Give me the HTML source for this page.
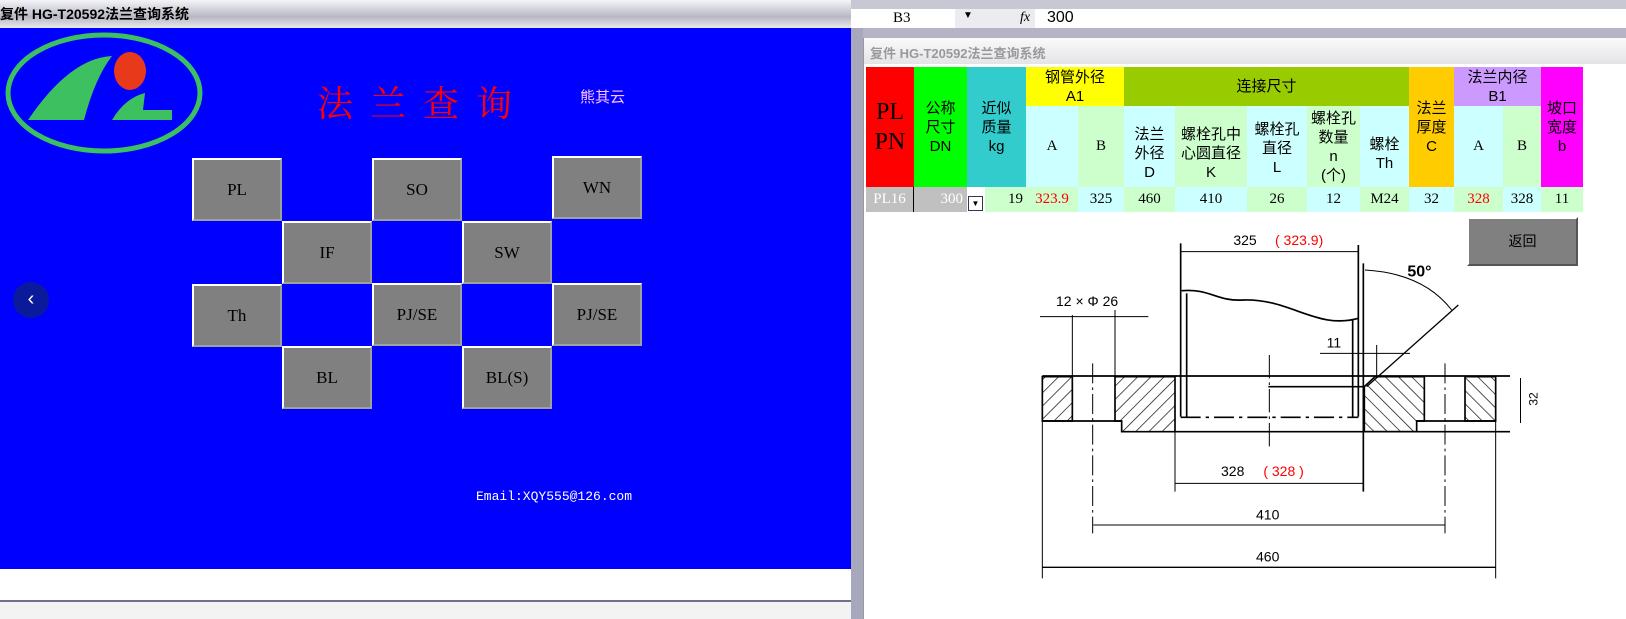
<!DOCTYPE html>
<html><head><meta charset="utf-8"><style>
*{margin:0;padding:0;box-sizing:border-box}
body{width:1626px;height:619px;overflow:hidden;background:#fff;position:relative;font-family:"Liberation Serif","Noto Serif CJK SC",serif}
.a{position:absolute}
.btn{position:absolute;width:90px;height:63px;background:#808080;border-top:2px solid #fff;border-left:2px solid #fff;border-right:2px solid #a0a0a0;border-bottom:2px solid #a0a0a0;color:#000;font-size:17px;display:flex;align-items:center;justify-content:center}
.c{position:absolute;display:flex;align-items:center;justify-content:center;text-align:center;font-size:15px;line-height:19px;color:#000}
.cn{font-family:"Liberation Sans","Noto Sans CJK SC",sans-serif}
</style></head><body>
<!-- left title bar -->
<div class="a" style="left:0;top:0;width:851px;height:28px;background:linear-gradient(#f4f4f8,#b8b8c4 60%,#e8e8ee);"></div>
<div class="a cn" style="left:0;top:4px;font-size:14px;font-weight:bold;color:#000">复件 HG-T20592法兰查询系统</div>
<div class="a" style="left:0;top:28px;width:851px;height:541px;background:#0000ff"></div>
<svg class="a" style="left:0;top:28px" width="220" height="130">
<ellipse cx="104" cy="65" rx="96" ry="58" fill="none" stroke="#3cc060" stroke-width="5"/>
<path d="M28 92 Q70 30 112 28 Q95 50 84 92 Z" fill="#3cc060"/>
<path d="M112 92 Q125 70 145 65 L143 82 L172 82 L172 92 Z" fill="#3cc060"/>
<ellipse cx="130" cy="43" rx="16" ry="19" fill="#e83a1a"/>
</svg>
<div class="a" style="left:317px;top:76px;font-size:36px;color:#ff0000;letter-spacing:17px;font-family:'Noto Serif CJK SC',serif">法兰查询</div>
<div class="a cn" style="left:580px;top:86px;font-size:15px;color:#ffc0ff">熊其云</div>
<div class="btn" style="left:192px;top:158px">PL</div>
<div class="btn" style="left:372px;top:158px">SO</div>
<div class="btn" style="left:552px;top:156px">WN</div>
<div class="btn" style="left:282px;top:221px">IF</div>
<div class="btn" style="left:462px;top:221px">SW</div>
<div class="btn" style="left:192px;top:284px">Th</div>
<div class="btn" style="left:372px;top:283px">PJ/SE</div>
<div class="btn" style="left:552px;top:283px">PJ/SE</div>
<div class="btn" style="left:282px;top:346px">BL</div>
<div class="btn" style="left:462px;top:346px">BL(S)</div>
<div class="a" style="left:13px;top:282px;width:36px;height:36px;border-radius:50%;background:#0a1a9a;color:#fff;font-size:20px;text-align:center;line-height:34px;font-family:'Liberation Sans',sans-serif">‹</div>
<div class="a" style="left:476px;top:489px;color:#fff;font-size:13px;font-family:'Liberation Mono',monospace">Email:XQY555@126.com</div>
<div class="a" style="left:0;top:600px;width:851px;height:2px;background:#707090"></div>
<div class="a" style="left:0;top:602px;width:851px;height:17px;background:#f3f3f3"></div>
<!-- separator -->
<div class="a" style="left:851px;top:28px;width:12px;height:591px;background:#a8a8bc"></div>
<!-- toolbar & formula -->
<div class="a" style="left:851px;top:0;width:775px;height:9px;background:#c8c8d4"></div>
<div class="a" style="left:851px;top:9px;width:775px;height:19px;background:#fff"></div>
<div class="a" style="left:955px;top:9px;width:80px;height:19px;background:#ececf0"></div>
<div class="a" style="left:893px;top:10px;font-size:15px">B3</div>
<div class="a" style="left:963px;top:10px;font-size:10px">▼</div>
<div class="a" style="left:1020px;top:10px;font-size:14px;font-style:italic">fx</div>
<div class="a" style="left:1047px;top:9px;font-size:16px;font-family:'Liberation Sans',sans-serif">300</div>
<div class="a" style="left:863px;top:28px;width:763px;height:591px;background:#b4b4c6"></div>
<div class="a" style="left:863px;top:38px;width:763px;height:581px;background:#fff;border-left:1px solid #999"></div>
<div class="a" style="left:864px;top:38px;width:762px;height:26px;background:linear-gradient(#fafafa,#e4e4e8)"></div>
<div class="a cn" style="left:870px;top:43px;font-size:13px;font-weight:bold;color:#999">复件 HG-T20592法兰查询系统</div>
<!-- table -->
<div class="c" style="left:866px;top:67px;width:48px;height:120px;background:#ff0000;font-size:24px;line-height:30px">PL<br>PN</div>
<div class="c cn" style="left:914px;top:67px;width:53px;height:120px;background:#00ff00">公称<br>尺寸<br>DN</div>
<div class="c cn" style="left:967px;top:67px;width:59px;height:120px;background:#33cccc">近似<br>质量<br>kg</div>
<div class="c cn" style="left:1026px;top:67px;width:98px;height:39px;background:#ffff00">钢管外径<br>A1</div>
<div class="c cn" style="left:1124px;top:67px;width:285px;height:39px;background:#99cc00">连接尺寸</div>
<div class="c cn" style="left:1409px;top:67px;width:45px;height:120px;background:#ffcc00">法兰<br>厚度<br>C</div>
<div class="c cn" style="left:1454px;top:67px;width:87px;height:39px;background:#cc99ff">法兰内径<br>B1</div>
<div class="c cn" style="left:1541px;top:67px;width:42px;height:120px;background:#ff00ff">坡口<br>宽度<br>b</div>
<div class="c" style="left:1026px;top:106px;width:52px;height:81px;background:#ccffff">A</div>
<div class="c" style="left:1078px;top:106px;width:46px;height:81px;background:#ccffcc">B</div>
<div class="c cn" style="left:1124px;top:106px;width:51px;height:81px;background:#ccffff;padding-top:14px">法兰<br>外径<br>D</div>
<div class="c cn" style="left:1175px;top:106px;width:72px;height:81px;background:#ccffcc;padding-top:14px">螺栓孔中<br>心圆直径<br>K</div>
<div class="c cn" style="left:1247px;top:106px;width:60px;height:81px;background:#ccffff;padding-top:4px">螺栓孔<br>直径<br>L</div>
<div class="c cn" style="left:1307px;top:106px;width:53px;height:81px;background:#ccffcc">螺栓孔<br>数量<br>n<br>(个)</div>
<div class="c cn" style="left:1360px;top:106px;width:49px;height:81px;background:#ccffff;padding-top:14px">螺栓<br>Th</div>
<div class="c" style="left:1454px;top:106px;width:49px;height:81px;background:#ccffff">A</div>
<div class="c" style="left:1503px;top:106px;width:38px;height:81px;background:#ccffcc">B</div>
<!-- data row -->
<div class="c" style="left:866px;top:187px;width:48px;height:25px;background:#c0c0c0;color:#fff;border-right:1px solid #000">PL16</div>
<div class="c" style="left:914px;top:187px;width:53px;height:25px;background:#c0c0c0;color:#fff;justify-content:flex-end;padding-right:4px">300</div>
<div class="a" style="left:968px;top:196px;width:15px;height:15px;border:1px solid #335;background:#fff;font-size:8px;text-align:center;line-height:13px">▼</div>
<div class="c" style="left:985px;top:187px;width:41px;height:25px;background:#ccffcc;justify-content:flex-end;padding-right:3px">19</div>
<div class="c" style="left:1026px;top:187px;width:52px;height:25px;background:#ccffcc;color:#f00">323.9</div>
<div class="c" style="left:1078px;top:187px;width:46px;height:25px;background:#ccffff">325</div>
<div class="c" style="left:1124px;top:187px;width:51px;height:25px;background:#ccffcc">460</div>
<div class="c" style="left:1175px;top:187px;width:72px;height:25px;background:#ccffff">410</div>
<div class="c" style="left:1247px;top:187px;width:60px;height:25px;background:#ccffcc">26</div>
<div class="c" style="left:1307px;top:187px;width:53px;height:25px;background:#ccffff">12</div>
<div class="c" style="left:1360px;top:187px;width:49px;height:25px;background:#ccffcc">M24</div>
<div class="c" style="left:1409px;top:187px;width:45px;height:25px;background:#ccffff">32</div>
<div class="c" style="left:1454px;top:187px;width:49px;height:25px;background:#ccffcc;color:#f00">328</div>
<div class="c" style="left:1503px;top:187px;width:38px;height:25px;background:#ccffff">328</div>
<div class="c" style="left:1541px;top:187px;width:42px;height:25px;background:#ccffcc">11</div>
<!-- return button -->
<div class="c cn" style="left:1467px;top:217px;width:111px;height:49px;background:#808080;border-top:2px solid #fff;border-left:2px solid #fff;border-right:2px solid #555;border-bottom:2px solid #555;font-size:14px">返回</div>
<!-- drawing -->
<svg class="a" style="left:1030px;top:220px" width="480" height="360" viewBox="0 0 1440 1080" font-family="Liberation Sans,sans-serif">
<defs><pattern id="h" width="28" height="28" patternUnits="userSpaceOnUse" patternTransform="rotate(45)"><line x1="0" y1="0" x2="0" y2="28" stroke="#000" stroke-width="4"/></pattern>
<pattern id="h2" width="28" height="28" patternUnits="userSpaceOnUse" patternTransform="rotate(-45)"><line x1="0" y1="0" x2="0" y2="28" stroke="#000" stroke-width="4"/></pattern></defs>
<g stroke="#000" stroke-width="5" fill="none">
<rect x="37" y="470" width="90" height="133" fill="url(#h)"/>
<path d="M255 470 H435 V635 H275 V603 H255 Z" fill="url(#h)"/>
<path d="M1003 500 L1035 470 H1183 V603 H1160 V635 H1003 Z" fill="url(#h2)"/>
<rect x="1305" y="470" width="92" height="133" fill="url(#h2)"/>
<line x1="37" y1="468" x2="1440" y2="468"/>
<line x1="37" y1="603" x2="275" y2="603"/>
<line x1="435" y1="635" x2="1440" y2="635"/>
<line x1="1160" y1="603" x2="1397" y2="603"/>
<line x1="452" y1="70" x2="452" y2="590"/><line x1="470" y1="220" x2="470" y2="590"/>
<line x1="985" y1="75" x2="985" y2="590"/><line x1="968" y1="300" x2="968" y2="590"/>
<line x1="1000" y1="130" x2="1000" y2="815"/>
<line x1="452" y1="592" x2="985" y2="592" stroke-dasharray="60 15 10 15"/>
<path d="M455 212 C540 205 560 245 640 240 C780 235 860 330 985 295"/>
<line x1="715" y1="500" x2="1003" y2="500"/>
<line x1="718" y1="405" x2="718" y2="680" stroke-width="3" stroke-dasharray="70 12 8 12"/>
<line x1="188" y1="430" x2="188" y2="940" stroke-width="3" stroke-dasharray="60 12 8 12"/>
<line x1="1245" y1="430" x2="1245" y2="940" stroke-width="3" stroke-dasharray="60 12 8 12"/>
<line x1="127" y1="285" x2="127" y2="470" stroke-width="3"/><line x1="255" y1="270" x2="255" y2="470" stroke-width="3"/>
<line x1="30" y1="290" x2="355" y2="290" stroke-width="3"/>
<line x1="452" y1="95" x2="985" y2="95" stroke-width="3"/>
<line x1="1010" y1="500" x2="1285" y2="255" stroke-width="4"/>
<path d="M1005 150 Q1180 160 1265 270" stroke-width="3"/>
<line x1="870" y1="400" x2="1140" y2="400" stroke-width="3"/>
<line x1="1040" y1="375" x2="1040" y2="470" stroke-width="3"/>
<line x1="435" y1="635" x2="435" y2="815" stroke-width="3"/>
<line x1="435" y1="790" x2="1000" y2="790" stroke-width="3"/>
<line x1="190" y1="915" x2="1245" y2="915" stroke-width="3"/>
<line x1="37" y1="603" x2="37" y2="1075" stroke-width="3"/><line x1="1397" y1="603" x2="1397" y2="1075" stroke-width="3"/>
<line x1="37" y1="1042" x2="1397" y2="1042" stroke-width="4"/>
</g>
<g font-size="42" fill="#000">
<text x="610" y="75">325</text><text x="735" y="75" fill="#f00">( 323.9)</text>
<text x="1132" y="170" font-size="48" font-weight="bold">50°</text>
<text x="78" y="258">12 × Φ 26</text>
<text x="890" y="383">11</text>
<text x="573" y="768">328</text><text x="700" y="768" fill="#f00">(  328  )</text>
<text x="678" y="898">410</text>
<text x="678" y="1025">460</text>
</g>
</svg>
<div class="a" style="left:1520px;top:378px;width:30px;height:45px;border-left:1px solid #000"></div>
<div class="a" style="left:1527px;top:392px;font-size:12px;transform:rotate(-90deg);font-family:'Liberation Sans',sans-serif">32</div>
</body></html>
